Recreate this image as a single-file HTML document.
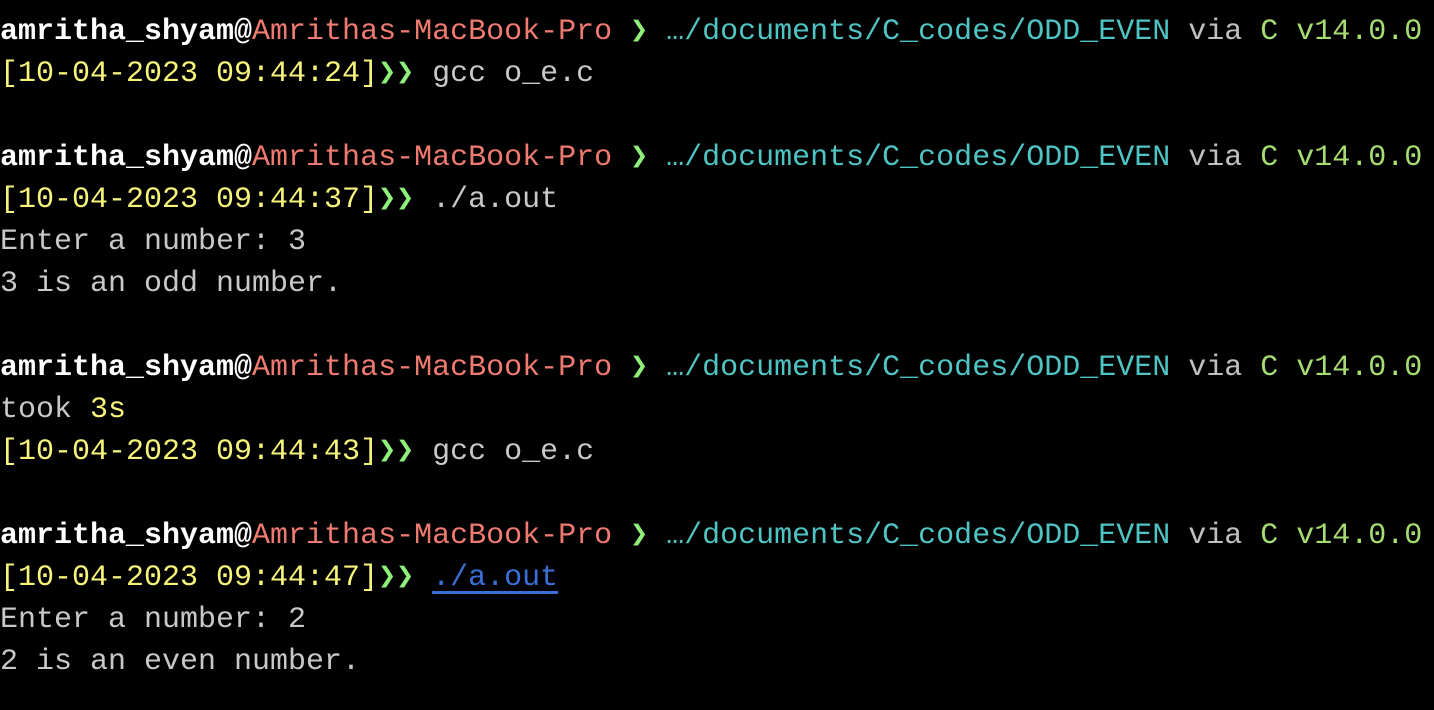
<!DOCTYPE html>
<html><head><meta charset="utf-8"><style>
html,body{margin:0;padding:0;background:#000;width:1434px;height:710px;overflow:hidden}
pre{margin:0;position:absolute;left:0;top:11px;font-family:"Liberation Mono","DejaVu Sans Mono",monospace;font-size:30px;line-height:42px;color:#c8c8c8;white-space:pre}
.u{color:#fff;font-weight:bold}
.h{color:#ef7a70}
.g{color:#8ef07a;font-weight:bold}
.p{color:#4fc4c4}
.v{color:#c0c0c0}
.c{color:#a6dd70}
.y{color:#f6f47a}
.gr{color:#8ef07a;font-weight:bold}
.w{color:#c8c8c8}
.k{display:inline-block;width:1ch;text-align:center;overflow:visible}
.lnk{color:#3b6fd8;text-decoration:underline;text-underline-offset:6px}
</style></head><body><pre><span class="u">amritha_shyam@</span><span class="h">Amrithas-MacBook-Pro</span> <span class="g k">❯</span> <span class="p"><span class="k">…</span>/documents/C_codes/ODD_EVEN</span> <span class="v">via</span> <span class="c">C v14.0.0</span>
<span class="y">[10-04-2023 09:44:24]</span><span class="gr"><span class="k">❯</span><span class="k">❯</span></span> <span class="w">gcc o_e.c</span>

<span class="u">amritha_shyam@</span><span class="h">Amrithas-MacBook-Pro</span> <span class="g k">❯</span> <span class="p"><span class="k">…</span>/documents/C_codes/ODD_EVEN</span> <span class="v">via</span> <span class="c">C v14.0.0</span>
<span class="y">[10-04-2023 09:44:37]</span><span class="gr"><span class="k">❯</span><span class="k">❯</span></span> <span class="w">./a.out</span>
Enter a number: 3
3 is an odd number.

<span class="u">amritha_shyam@</span><span class="h">Amrithas-MacBook-Pro</span> <span class="g k">❯</span> <span class="p"><span class="k">…</span>/documents/C_codes/ODD_EVEN</span> <span class="v">via</span> <span class="c">C v14.0.0</span>
took <span class="y">3s</span>
<span class="y">[10-04-2023 09:44:43]</span><span class="gr"><span class="k">❯</span><span class="k">❯</span></span> <span class="w">gcc o_e.c</span>

<span class="u">amritha_shyam@</span><span class="h">Amrithas-MacBook-Pro</span> <span class="g k">❯</span> <span class="p"><span class="k">…</span>/documents/C_codes/ODD_EVEN</span> <span class="v">via</span> <span class="c">C v14.0.0</span>
<span class="y">[10-04-2023 09:44:47]</span><span class="gr"><span class="k">❯</span><span class="k">❯</span></span> <span class="lnk">./a.out</span>
Enter a number: 2
2 is an even number.</pre></body></html>
